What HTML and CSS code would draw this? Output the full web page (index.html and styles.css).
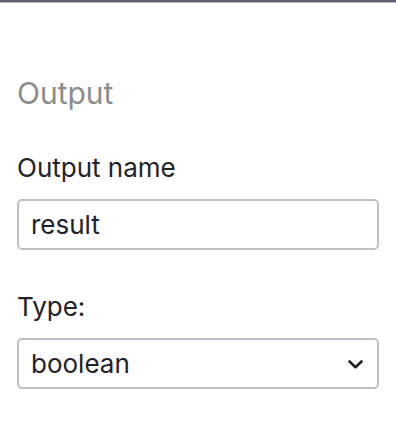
FILE: index.html
```html
<!DOCTYPE html>
<html>
<head>
  <title>Output</title>
  <link rel="stylesheet" href="styles.css">
</head>
<body>
  <div class="panel">
    <h2 class="section-title">Output</h2>
    <div class="field">
      <label class="field-label" for="outputName">Output name</label>
      <input class="text-input" id="outputName" type="text" value="result">
    </div>
    <div class="field">
      <label class="field-label" for="outputType">Type:</label>
      <div class="select-wrap">
        <select class="select-input" id="outputType">
          <option>boolean</option>
          <option>string</option>
          <option>number</option>
        </select>
        <svg class="chevron" width="17" height="11" viewBox="0 0 17 11">
          <path d="M2.5 2.5 L8.5 8.2 L14.5 2.5" fill="none" stroke="#1f1f24" stroke-width="2.6" stroke-linecap="round" stroke-linejoin="round"/>
        </svg>
      </div>
    </div>
  </div>
</body>
</html>
```

FILE: styles.css
```css
body {
  margin: 0;
  font-family: Inter, "Noto Sans", sans-serif;
  background: #ffffff;
  color: #222228;
  border-top: 2px solid #5c5e6c;
}

.panel {
  padding: 0 17px;
  border-top: 1px solid #b4b6c0;
}

.section-title {
  margin: 0;
  padding-top: 72px;
  font-size: 30px;
  font-weight: 400;
  color: #8c8c8c;
  line-height: 36px;
}

.field {
  margin-top: 42px;
}

.field-label {
  display: block;
  font-size: 26px;
  line-height: 30px;
  margin-bottom: 16px;
}

.text-input,
.select-input {
  box-sizing: border-box;
  width: 100%;
  height: 51px;
  padding: 0 12px;
  border: 2px solid #bec1ca;
  border-radius: 5px;
  font-family: inherit;
  font-size: 26px;
  color: #222228;
  background: #ffffff;
  outline: none;
}

.select-wrap {
  position: relative;
}

.select-input {
  appearance: none;
  -webkit-appearance: none;
}

.chevron {
  position: absolute;
  right: 15px;
  top: 21px;
  pointer-events: none;
}
```
